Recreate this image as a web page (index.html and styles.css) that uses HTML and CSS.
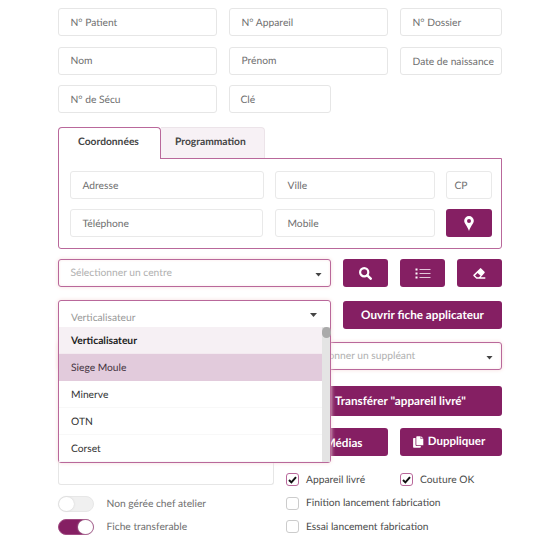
FILE: index.html
```html
<!DOCTYPE html>
<html lang="fr">
<head>
<meta charset="utf-8">
<title>Fiche patient</title>
<link rel="stylesheet" href="styles.css">
</head>
<body>
<main class="form">
  <section class="identity">
    <div class="field">N° Patient</div>
    <div class="field">N° Appareil</div>
    <div class="field">N° Dossier</div>
    <div class="field">Nom</div>
    <div class="field">Prénom</div>
    <div class="field low">Date de naissance</div>
    <div class="field">N° de Sécu</div>
    <div class="field key low">Clé</div>
  </section>

  <section class="contact">
    <div class="tabs">
      <div class="tab active">Coordonnées</div>
      <div class="tab">Programmation</div>
    </div>
    <div class="panel">
      <div class="field">Adresse</div>
      <div class="field">Ville</div>
      <div class="field cp">CP</div>
      <div class="field phone">Téléphone</div>
      <div class="field">Mobile</div>
      <div class="btn pin"><svg width="10" height="15" viewBox="0 0 10 15"><path fill="#fff" fill-rule="evenodd" d="M5 0a4.800 4.800 0 0 1 4.800 4.800C9.800 7.500 7 9.600 5 15 3 9.600.2 7.500.2 4.800A4.800 4.800 0 0 1 5 0zm0 2.900a2 2 0 1 0 0 4 2 2 0 0 0 0-4z"/></svg></div>
    </div>
  </section>

  <section class="center-row">
    <div class="select">Sélectionner un centre<i class="caret"></i></div>
    <div class="btn"><svg width="13" height="13" viewBox="0 0 13 13"><circle cx="5.200" cy="5.200" r="4.100" fill="none" stroke="#fff" stroke-width="2.200"/><path d="M8.300 8.300l3.400 3.400" stroke="#fff" stroke-width="2.500" stroke-linecap="round"/></svg></div>
    <div class="btn"><svg width="16" height="11" viewBox="0 0 16 11"><path fill="#fff" d="M.5.500h2v2h-2zM.5 4.500h2v2h-2zM.5 8.500h2v2h-2z"/><path stroke="#e3c6da" d="M4.500 1.500H15.500M4.500 5.500H15.500M4.500 9.500H15.500"/></svg></div>
    <div class="btn"><svg width="13" height="11" viewBox="0 0 13 11"><path fill="#fff" fill-rule="evenodd" d="M7 .4q.6-.6 1.200 0l3.300 3.300q.6.600 0 1.200L7.700 9.200H12.300V10.700H3.400L.5 7.900q-.5-.6 0-1.200zM4.600 4.900L2 7.400 3.900 9.200H5.900L7.600 7.700z"/></svg></div>
  </section>

  <section class="device">
    <div class="device-select">
      <div class="dropdown">
        <div class="current">Verticalisateur<i class="caret"></i></div>
        <div class="list">
          <ul class="options">
            <li class="chosen">Verticalisateur</li>
            <li class="hover">Siege Moule</li>
            <li>Minerve</li>
            <li>OTN</li>
            <li>Corset</li>
          </ul>
          <div class="track"><div class="thumb"></div></div>
        </div>
      </div>
    </div>
    <div class="btn">Ouvrir fiche applicateur</div>
  </section>

  <section class="staff">
    <div class="select"></div>
    <div class="select">Sélectionner un suppléant<i class="caret"></i></div>
  </section>

  <section class="actions">
    <div class="btn transfer">Transférer "appareil livré"</div>
    <div class="btn media">Médias</div>
    <div class="btn duplicate"><svg width="11" height="12" viewBox="0 0 11 12"><path fill="#fff" d="M4 .3H7.600V3H10.300V9.200H4q-.7 0-.7-.7V1Q3.300.3 4 .3zM8.200.3l2.200 2.200H8.200zM.8 2H2.500V8.700Q2.500 10 3.800 10H7.800v1q0 .7-.7.700H.8Q.1 11.700.1 11V2.700Q.1 2 .8 2z"/></svg>Duppliquer</div>
  </section>

  <section class="bottom">
    <div class="notes-col">
      <div class="notes"></div>
      <div class="toggle-row"><span class="toggle"><b></b></span>Non gérée chef atelier</div>
      <div class="toggle-row second"><span class="toggle on"><b></b></span>Fiche transferable</div>
    </div>
    <div class="checks">
      <div class="check"><span class="box on"><svg width="9" height="8" viewBox="0 0 9 8"><path d="M1 4l2.400 2.400L8 1.200" fill="none" stroke="#111" stroke-width="2"/></svg></span>Appareil livré</div>
      <div class="check"><span class="box on"><svg width="9" height="8" viewBox="0 0 9 8"><path d="M1 4l2.400 2.400L8 1.200" fill="none" stroke="#111" stroke-width="2"/></svg></span>Couture OK</div>
      <div class="check wide"><span class="box"></span>Finition lancement fabrication</div>
      <div class="check wide"><span class="box"></span>Essai lancement fabrication</div>
    </div>
  </section>
</main>
</body>
</html>
```
FILE: styles.css
```css
* { box-sizing: border-box; }
body { margin: 0; background: #fff; font: 10.250px/14px Lato, sans-serif; color: #707070; text-rendering: geometricPrecision; }
svg { display: block; flex: none; }
.form { width: 444px; margin-left: 58px; padding-top: 8px; }

.field, .select {
  display: flex; align-items: center; height: 28px; padding: 1px 11.5px 0;
  border: 1px solid #e6e6e6; border-radius: 3px; background: #fff; white-space: nowrap;
}
.field.low { padding-top: 2px; }
.identity { display: grid; grid-template-columns: 159px 159px 102px; gap: 10.5px 12px; }
.key { width: 102px; padding-left: 10.5px; }

.btn {
  display: flex; align-items: center; justify-content: center; height: 28px;
  border-radius: 3px; background: #851f63; color: #fff; font-size: 11.700px; font-weight: 700; white-space: nowrap;
}

.contact { margin-top: 14px; }
.tabs { display: flex; height: 32px; }
.tab {
  width: 104px; height: 31px; padding: 7px 0 0 14px;
  border: 1px solid #ece4e9; border-left: 0; border-bottom: 0; border-radius: 0 4px 0 0;
  background: #f7f1f5; color: #444; font-weight: 700;
}
.tab.active {
  position: relative; width: 103px; height: 32px; padding-left: 19px;
  border: 1px solid #b9689b; border-bottom: 0; border-radius: 4px 4px 0 0; background: #fff;
}
.panel {
  display: grid; grid-template-columns: 194px 160px 46px; gap: 10px 11px;
  height: 91px; margin-top: -1px; padding: 12px 11px 0; align-content: start;
  border: 1px solid #b9689b; border-radius: 0 0 3px 3px;
}
.panel .field { border-color: #e9e9e9; }
.phone { width: 193px; }
.panel .cp { padding: 1px 0 0 7.5px; }

.center-row { display: grid; grid-template-columns: 273px repeat(3, 45px); column-gap: 12px; margin-top: 10px; }
.select { justify-content: space-between; padding-right: 8px; padding-top: 0; border-color: #b9689b; color: #b0b0b0; box-shadow: 0 0 4px #f6dede, inset 0 0 3px #f9eaea; }
.caret { width: 7px; height: 4px; margin-top: 3px; background: #444; clip-path: polygon(0 0, 100% 0, 50% 100%); }

.device { display: grid; grid-template-columns: 273px 159px; column-gap: 12px; margin-top: 13px; height: 29px; }
.device .btn { margin-top: 1px; padding-bottom: 1px; }
.device-select { position: relative; }
.dropdown {
  position: absolute; z-index: 2; top: 0; left: 0; width: 273px; height: 163px;
  border: 1px solid #b9689b; border-radius: 3px; background: #fff; box-shadow: 0 0 4px #f6dede;
}
.current { display: flex; justify-content: space-between; height: 26px; padding: 10px 13px 0 12px; color: #999; }
.current .caret { margin-top: 2px; }
.list { display: flex; height: 135px; }
.options { flex: 1; margin: 0; padding: 0; list-style: none; color: #333; }
.options li { height: 27px; padding: 7px 12px 0; border-bottom: 1px solid #f8f8f8; }
.options .chosen { background: #f6f0f4; border-color: #f3eaf0; color: #222; font-weight: 700; }
.options .hover { background: #e2cbdc; border-color: #e2cbdc; color: #443340; }
.track { width: 8px; background: #e4e4e4; }
.thumb { width: 9px; height: 11px; border-radius: 5px; background: #aaa; }

.staff { display: grid; grid-template-columns: 216px 216px; column-gap: 12px; margin-top: 13px; }
.actions { display: grid; grid-template-columns: 159px 102px; gap: 12px; justify-content: end; margin-top: 16px; }
.transfer { grid-column: 1 / 3; height: 30px; margin-left: 55px; justify-content: flex-end; padding-right: 36px; }
.media { justify-content: flex-end; padding: 1px 25.5px 0 0; }
.duplicate { gap: 4px; padding: 0 4px 1px 0; font-size: 11.500px; }

.bottom { display: grid; grid-template-columns: 216px 216px; column-gap: 12px; }
.notes { height: 29px; border: 1px solid #e6e6e6; border-top: 0; border-radius: 0 0 3px 3px; }
.toggle-row { display: flex; align-items: center; height: 17px; margin-top: 10px; gap: 12.500px; }
.toggle-row.second { margin-top: 6px; }
.toggle { display: flex; width: 36px; height: 16px; border: 1px solid #e7e7e7; border-radius: 8px; background: #f0f0f0; }
.toggle b { width: 15px; height: 14px; border-radius: 50%; background: #fff; box-shadow: 0 0 2px #ccc; }
.toggle.on { justify-content: flex-end; border-color: #a04a82; background: #851f63; }
.checks { display: grid; grid-template-columns: 114px 102px; grid-template-rows: 13px 13px 13px; row-gap: 10.700px; padding-top: 17px; color: #4c4c4c; }
.check { display: flex; align-items: center; gap: 7px; white-space: nowrap; }
.check.wide { grid-column: 1 / 3; }
.box { display: flex; align-items: center; justify-content: center; width: 13px; height: 13px; border: 1px solid #ccc; border-radius: 3px; }
.box.on { border-color: #b9689b; }
```
